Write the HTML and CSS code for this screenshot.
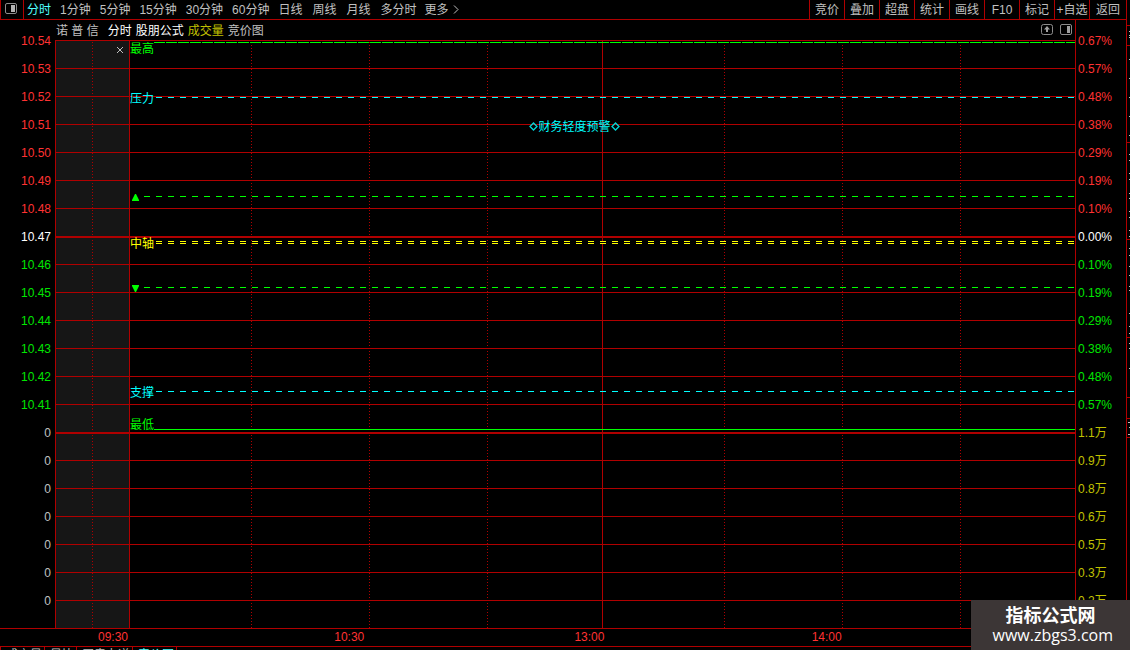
FILE: index.html
```html
<!DOCTYPE html>
<html lang="zh-CN">
<head>
<meta charset="utf-8">
<title>诺普信 分时</title>
<link rel="stylesheet" href="styles.css">
</head>
<body>
<div class="app">
  <div class="main">
    <header class="toolbar">
      <button class="panel-toggle" aria-label="侧栏">
        <svg width="12" height="11" viewBox="0 0 12 11"><rect x="0.5" y="0.5" width="11" height="10" rx="1.5" fill="none" stroke="#8c8c8c"/><rect x="6" y="2" width="4" height="7" fill="#b4b4b4"/></svg>
      </button>
      <nav class="periods">
        <button class="active">分时</button>
        <button>1分钟</button>
        <button>5分钟</button>
        <button>15分钟</button>
        <button>30分钟</button>
        <button>60分钟</button>
      </nav>
      <nav class="periods periods-long">
        <button>日线</button>
        <button>周线</button>
        <button>月线</button>
        <button>多分时</button>
      </nav>
      <button class="more">更多<svg width="6" height="9" viewBox="0 0 6 9"><path d="M1 0.5L5 4.5L1 8.5" fill="none" stroke="#c0c0c0"/></svg></button>
      <nav class="actions">
        <button>竞价</button>
        <button>叠加</button>
        <button>超盘</button>
        <button>统计</button>
        <button>画线</button>
        <button>F10</button>
        <button>标记</button>
        <button>+自选</button>
        <button>返回</button>
      </nav>
    </header>

    <div class="body">
      <div class="axis axis-left">
        <span class="up">10.54</span>
        <span class="up">10.53</span>
        <span class="up">10.52</span>
        <span class="up">10.51</span>
        <span class="up">10.50</span>
        <span class="up">10.49</span>
        <span class="up">10.48</span>
        <span class="flat">10.47</span>
        <span class="down">10.46</span>
        <span class="down">10.45</span>
        <span class="down">10.44</span>
        <span class="down">10.43</span>
        <span class="down">10.42</span>
        <span class="down">10.41</span>
        <span>0</span>
        <span>0</span>
        <span>0</span>
        <span>0</span>
        <span>0</span>
        <span>0</span>
        <span>0</span>
      </div>

      <section class="chart">
        <div class="chart-head">
          <span>诺 普 信</span>
          <div class="series">
            <span class="white">分时</span>
            <span class="white">股朋公式</span>
            <span class="yellow">成交量</span>
            <span>竞价图</span>
          </div>
          <div class="head-tools">
            <button aria-label="上移"><svg width="12" height="11" viewBox="0 0 12 11"><rect x="0.5" y="0.5" width="11" height="10" rx="2" fill="none" stroke="#8c8c8c"/><path d="M6 2L9 5.500H7V8H5V5.500H3Z" fill="#a0a0a0"/></svg></button>
            <button aria-label="面板"><svg width="12" height="11" viewBox="0 0 12 11"><rect x="0.5" y="0.5" width="11" height="10" rx="1.5" fill="none" stroke="#8c8c8c"/><rect x="7" y="2" width="3" height="7" fill="#a0a0a0"/></svg></button>
          </div>
        </div>
        <div class="plot">
          <div class="cols">
            <i class="pre"></i><i class="pre dot"></i><i class="solid"></i><i class="dot"></i><i class="dot"></i><i class="dot"></i><i class="dot"></i><i class="dot"></i><i class="dot"></i><i class="noon"></i>
          </div>
          <div class="rows">
            <i></i><i></i><i></i><i></i><i></i><i></i><i></i>
            <i class="thick"></i><i></i><i></i><i></i><i></i><i></i><i></i>
            <i class="thick"></i><i></i><i></i><i></i><i></i><i></i><i></i>
          </div>
          <button class="close" aria-label="关闭"><svg width="8" height="8" viewBox="0 0 8 8"><path d="M1 1L7 7M7 1L1 7" stroke="#c0c0c0"/></svg></button>
          <div class="level green highest"><span>最高</span><b class="line long"></b></div>
          <div class="level cyan pressure"><span>压力</span><b class="line"></b></div>
          <div class="level green mark upper"><svg width="9" height="8" viewBox="0 0 9 8"><path d="M4 0H5L8 6V7H1V6Z" fill="#0f0"/></svg><b class="line"></b></div>
          <div class="level yellow-line middle"><span>中轴</span><b class="line double"></b></div>
          <div class="level green mark lower"><svg width="9" height="8" viewBox="0 0 9 8"><path d="M1 0H8V1L5 7H4L1 1Z" fill="#0f0"/></svg><b class="line"></b></div>
          <div class="level cyan support"><span>支撑</span><b class="line"></b></div>
          <div class="level green lowest"><span>最低</span><b class="line full"></b></div>
          <div class="notice">
            <svg width="9" height="9" viewBox="0 0 9 9"><path d="M4.500 1L8 4.500L4.500 8L1 4.500Z" fill="none" stroke="#00d8d8" stroke-width="1.300"/></svg><span>财务轻度预警</span><svg width="9" height="9" viewBox="0 0 9 9"><path d="M4.500 1L8 4.500L4.500 8L1 4.500Z" fill="none" stroke="#00d8d8" stroke-width="1.300"/></svg>
          </div>
        </div>
      </section>

      <div class="axis axis-right">
        <span class="up">0.67%</span>
        <span class="up">0.57%</span>
        <span class="up">0.48%</span>
        <span class="up">0.38%</span>
        <span class="up">0.29%</span>
        <span class="up">0.19%</span>
        <span class="up">0.10%</span>
        <span class="flat">0.00%</span>
        <span class="down">0.10%</span>
        <span class="down">0.19%</span>
        <span class="down">0.29%</span>
        <span class="down">0.38%</span>
        <span class="down">0.48%</span>
        <span class="down">0.57%</span>
        <span class="vol">1.1万</span>
        <span class="vol">0.9万</span>
        <span class="vol">0.8万</span>
        <span class="vol">0.6万</span>
        <span class="vol">0.5万</span>
        <span class="vol">0.3万</span>
        <span class="vol">0.2万</span>
      </div>
    </div>

    <div class="times">
      <span>09:30</span><span>10:30</span><span>13:00</span><span>14:00</span>
    </div>
    <nav class="tabs">
      <button>成交量</button><button>量比</button><button>买卖力道</button><button class="active">竞价图</button>
    </nav>
  </div>

  <aside class="side">
    <svg width="3" height="640" viewBox="0 0 3 640" shape-rendering="crispEdges">
      <path d="M0 25.500H3M0 45.500H3M0 142.500H3M0 239.500H3M0 337.500H3M0 397.500H3M0 418.500H3M0 437.500H3" stroke="#b00000"/>
      <path d="M2 31.500H3M2 35.500H3M2 37.500H3M2 59.500H3M2 78.500H3M2 97.500H3M2 116.500H3M2 135.500H3M2 154.500H3M2 160.500H3M2 173.500H3M2 179.500H3M2 193.500H3M2 198.500H3M2 211.500H3M2 217.500H3M2 230.500H3M2 236.500H3M2 248.500H3M2 255.500H3M2 266.500H3M2 275.500H3M2 286.500H3M2 290.500H3M2 313.500H3M2 326.500H3M2 333.500H3M2 343.500H3M2 348.500H3M2 368.500H3M1 422.500H3M2 427.500H3M1 434.500H3" stroke="#c0c0c0"/>
    </svg>
  </aside>

  <div class="watermark">
    <strong>指标公式网</strong>
    <span>www.zbgs3.com</span>
  </div>
</div>
</body>
</html>
```
FILE: styles.css
```css
* {
  box-sizing: border-box;
}

html,
body {
  margin: 0;
  height: 100%;
  background: #000;
}

body {
  --line: #b00000;
  --text: #c0c0c0;
  color: var(--text);
  font: 12px/14px "Liberation Sans", "Noto Sans CJK SC", sans-serif;
}

button {
  margin: 0;
  padding: 0;
  border: 0;
  background: none;
  color: inherit;
  font: inherit;
  white-space: nowrap;
}

svg {
  display: block;
  flex: none;
}

.app {
  position: relative;
  display: flex;
  height: 100vh;
  overflow: hidden;
}

.main {
  flex: 1;
  min-width: 0;
  display: flex;
  flex-direction: column;
}

.side {
  flex: none;
  border-left: 1px solid var(--line);
}

/* toolbar */
.toolbar {
  flex: none;
  display: flex;
  height: 20px;
  border-bottom: 1px solid var(--line);
}

.panel-toggle {
  width: 24px;
  padding: 0 0 2px 4px;
  border: solid var(--line);
  border-width: 0 1px;
}

.periods {
  display: flex;
  align-items: center;
  gap: 9px;
  padding-left: 3px;
}

.periods-long {
  gap: 10px;
  padding-left: 9px;
}

.more {
  display: flex;
  align-items: center;
  gap: 4px;
  padding-left: 8px;
}

.periods .active {
  color: #50ffff;
}

.actions {
  display: flex;
  margin-left: auto;
}

.actions button {
  width: 35px;
  border-left: 1px solid var(--line);
}

.actions button:last-child {
  width: 37px;
}

/* chart body */
.body {
  flex: none;
  display: flex;
}

.axis {
  flex: none;
  padding-top: 7px;
}

.axis span {
  display: block;
  height: 28px;
  line-height: 28px;
}

.axis-left {
  width: 55px;
  padding-right: 4px;
  text-align: right;
}

.axis-right {
  width: 51px;
  padding-left: 2px;
  border-left: 1px solid var(--line);
}

.up {
  color: #ff3232;
}

.flat {
  color: #fff;
}

.down {
  color: #00e600;
}

.vol,
.yellow {
  color: #c0c000;
}

.white {
  color: #fff;
}

.chart {
  flex: 1;
  min-width: 0;
}

.chart-head {
  display: flex;
  align-items: center;
  gap: 9px;
  height: 20px;
  padding: 1px 3px 0 1px;
}

.series {
  display: flex;
  gap: 4px;
}

.head-tools {
  display: flex;
  gap: 7px;
  margin-left: auto;
  padding-bottom: 2px;
}

.plot {
  position: relative;
  display: grid;
  border-left: 1px solid var(--line);
}

.cols,
.rows {
  grid-area: 1 / 1;
}

.cols {
  display: grid;
  grid-template-columns: 36px 37px 122fr 118fr 118fr 115fr 122fr 118fr 118fr 115fr;
}

.cols i {
  grid-row: 1;
}

.pre {
  background-color: #161616;
}

.dot {
  background-image: repeating-linear-gradient(to bottom, transparent 0 2px, var(--line) 2px 3px);
  background-size: 1px 100%;
  background-repeat: no-repeat;
}

.solid {
  border-left: 1px solid var(--line);
}

.cols .noon {
  grid-column: 7;
  border-left: 1px solid var(--line);
}

.rows i {
  display: block;
  height: 28px;
  border-top: 1px solid var(--line);
}

.rows .thick {
  border-top-width: 2px;
}

.close {
  position: absolute;
  top: 6px;
  left: 60px;
}

/* price levels drawn over the grid */
.level {
  position: absolute;
  left: 74px;
  right: 0;
  display: flex;
  align-items: center;
  gap: 2px;
  height: 14px;
}

.level span {
  padding-top: 4px;
}

.line {
  flex: 1;
  height: 1px;
  background: repeating-linear-gradient(to right, currentColor 0 6px, transparent 6px 12px);
}

.line.long {
  background: repeating-linear-gradient(to right, currentColor 0 11px, transparent 11px 12px);
}

.line.full {
  background: currentColor;
}

.line.double {
  height: 3px;
  background:
    linear-gradient(#000, #000) 0 1px / 100% 1px no-repeat,
    repeating-linear-gradient(to right, currentColor 0 6px, transparent 6px 12px);
}

.green {
  color: #0f0;
}

.cyan {
  color: #0ff;
}

.yellow-line {
  color: #ff0;
}

.mark {
  gap: 4px;
  padding-left: 1px;
}

.mark svg {
  margin-top: 3px;
}

.highest {
  top: 2px;
  gap: 0;
  align-items: flex-start;
}

.highest span,
.lowest span {
  padding-top: 0;
}

.pressure {
  top: 50px;
}

.upper {
  top: 149px;
}

.middle {
  top: 195px;
}

.lower {
  top: 240px;
}

.support {
  top: 344px;
}

.lowest {
  top: 378px;
  gap: 0;
  align-items: flex-end;
}

.lowest .line {
  margin-bottom: 2px;
}

.notice {
  position: absolute;
  top: 79px;
  left: 0;
  right: 0;
  display: flex;
  align-items: center;
  justify-content: center;
  height: 14px;
  padding-left: 18px;
  color: #0ff;
}

.notice span {
  padding-top: 2px;
}

/* time axis and bottom tabs */
.times {
  flex: none;
  display: grid;
  grid-template-columns: 128px 236fr 240fr 237fr 284fr;
  height: 19px;
  border: solid var(--line);
  border-width: 1px 0;
  color: #ff3232;
  line-height: 17px;
  text-align: right;
}

.tabs {
  display: flex;
  align-items: flex-start;
  height: 3px;
  overflow: hidden;
  border-left: 1px solid var(--line);
}

.tabs button {
  padding: 1px 2px 0 5px;
  border-right: 1px solid var(--line);
}

.tabs .active {
  color: #50ffff;
}

/* corner watermark */
.watermark {
  position: absolute;
  right: 0;
  bottom: 0;
  display: flex;
  flex-direction: column;
  align-items: flex-start;
  padding: 5px 17px 5px 22px;
  background: #3c3636;
  color: #fff;
  font: 16px/20px "Open Sans", "Noto Sans CJK SC", sans-serif;
}

.watermark strong {
  padding-left: 13px;
  font-size: 18px;
  font-weight: 700;
}
```
